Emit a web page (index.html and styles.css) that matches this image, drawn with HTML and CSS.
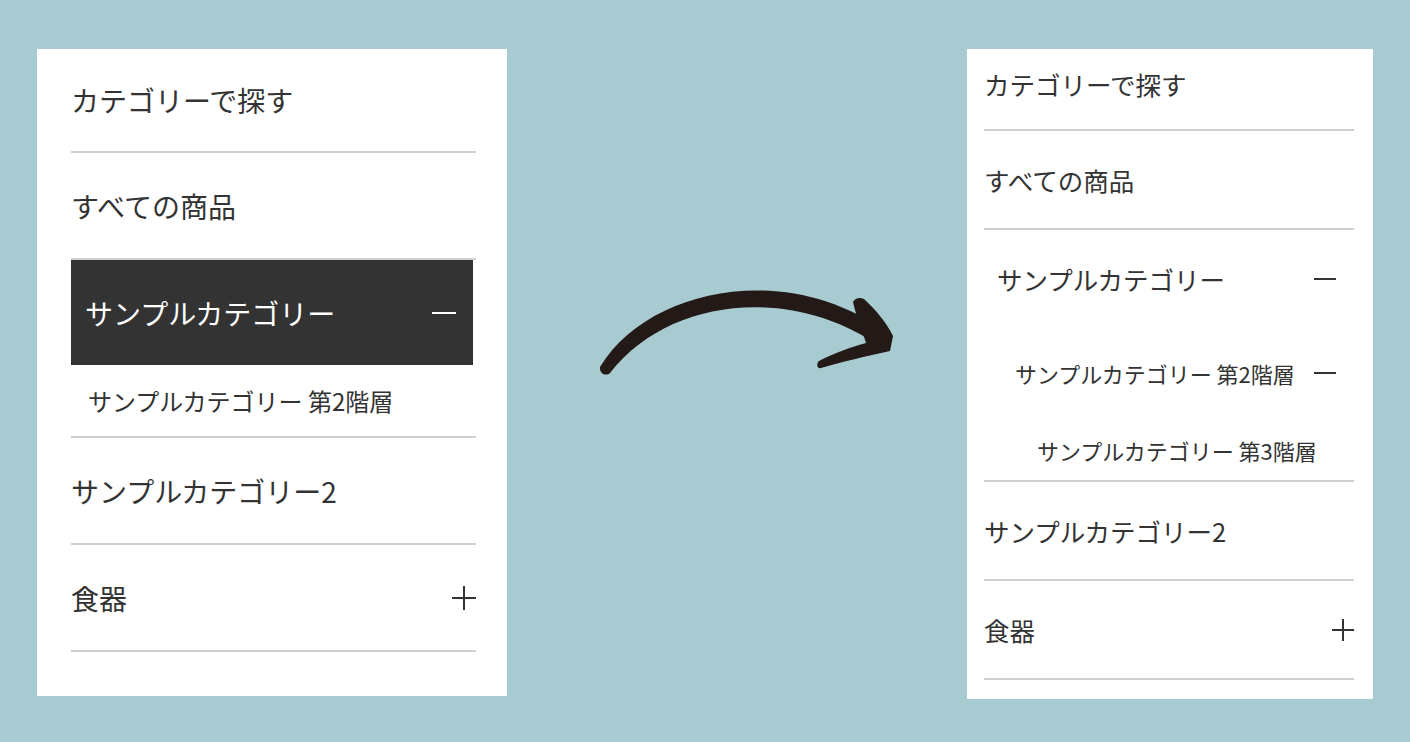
FILE: index.html
```html
<!DOCTYPE html>
<html lang="ja">

<head>
  <meta charset="UTF-8" />
  <title>カテゴリーメニュー</title>
  <meta name="viewport" content="width=device-width, initial-scale=1.0" />
  <link rel="stylesheet" href="styles.css">
</head>

<body>
  <!-- before -->
  <nav class="cat-menu cat-menu--before">
    <ul class="cat-list">
      <li class="cat-item"><span class="cat-link cat-link--title">カテゴリーで探す</span></li>
      <li class="cat-item"><a class="cat-link" href="#">すべての商品</a></li>
      <li class="cat-item">
        <a class="cat-link cat-link--open" href="#">サンプルカテゴリー<span class="icon-minus"></span></a>
        <ul class="sub-list">
          <li><a class="cat-link sub-link" href="#">サンプルカテゴリー 第2階層</a></li>
        </ul>
      </li>
      <li class="cat-item"><a class="cat-link" href="#">サンプルカテゴリー2</a></li>
      <li class="cat-item"><a class="cat-link" href="#">食器<span class="icon-plus"></span></a></li>
    </ul>
  </nav>

  <svg class="arrow" width="460" height="647" viewBox="507 49 460 647" aria-hidden="true">
    <path d="M600,367 C648,287 790,260 887,333 L881,347 C790,284 668,298 610,373 C606,377 599,373 600,367 Z" />
    <path d="M853,302 C855,298 860,297 864,299 C876,310 886,322 893,336 L890,351 C866,356 842,362 821,368 C817,369 816,364 819,361 C836,352 852,347 866,343 C862,330 856,316 853,302 Z" />
  </svg>

  <!-- after -->
  <nav class="cat-menu cat-menu--after">
    <ul class="cat-list">
      <li class="cat-item"><span class="cat-link cat-link--title">カテゴリーで探す</span></li>
      <li class="cat-item"><a class="cat-link" href="#">すべての商品</a></li>
      <li class="cat-item">
        <a class="cat-link cat-link--open" href="#">サンプルカテゴリー<span class="icon-minus"></span></a>
        <ul class="sub-list">
          <li>
            <a class="cat-link sub-link" href="#">サンプルカテゴリー 第2階層<span class="icon-minus"></span></a>
            <ul class="sub-list">
              <li><a class="cat-link sub-link sub-link--deep" href="#">サンプルカテゴリー 第3階層</a></li>
            </ul>
          </li>
        </ul>
      </li>
      <li class="cat-item"><a class="cat-link" href="#">サンプルカテゴリー2</a></li>
      <li class="cat-item"><a class="cat-link" href="#">食器<span class="icon-plus"></span></a></li>
    </ul>
  </nav>
</body>

</html>
```

FILE: styles.css
```css
:root {
  --bg-color: #a8cbd1;
  --text-color: #333333;
  --line-color: #d0d0d0;
}

* {
  box-sizing: border-box;
}

html,
body {
  margin: 0;
  padding: 0;
}

body {
  display: flex;
  justify-content: space-between;
  align-items: flex-start;
  padding: 49px 37px 0;
  min-height: 742px;
  background: var(--bg-color);
  font-family: 'Noto Sans CJK JP', 'Noto Sans', sans-serif;
  color: var(--text-color);
}

.cat-menu {
  background: white;
}

.cat-list,
.sub-list {
  list-style: none;
  margin: 0;
  padding: 0;
}

.cat-item {
  border-bottom: 2px solid var(--line-color);
}

.cat-link {
  display: flex;
  align-items: center;
  justify-content: space-between;
  color: inherit;
  text-decoration: none;
  white-space: nowrap;
}

.arrow {
  flex-shrink: 0;
  fill: #231a17;
}

/* icons */
.icon-minus,
.icon-plus {
  position: relative;
  display: block;
  flex-shrink: 0;
  width: 24px;
  height: 24px;
}

.icon-minus::before,
.icon-plus::before,
.icon-plus::after {
  content: "";
  position: absolute;
  background: currentColor;
}

.icon-minus::before,
.icon-plus::before {
  left: 0;
  right: 0;
  top: 11px;
  height: 2px;
}

.icon-plus::after {
  top: 0;
  bottom: 0;
  left: 11px;
  width: 2px;
}

/* before */
.cat-menu--before {
  width: 470px;
  padding: 0 31px 44px 34px;
}

.cat-menu--before .cat-link {
  height: 105px;
  font-size: 28px;
}

.cat-menu--before .cat-link--title {
  height: 102px;
}

.cat-menu--before .cat-link--open {
  margin-right: 3px;
  padding: 0 17px 0 14px;
  background: #333333;
  color: white;
}

.cat-menu--before .sub-link {
  height: 71px;
  padding-left: 17px;
  font-size: 24px;
}

/* after */
.cat-menu--after {
  width: 406px;
  padding: 0 19px 19px 17px;
}

.cat-menu--after .cat-link {
  height: 97px;
  font-size: 25.5px;
}

.cat-menu--after .cat-link--title {
  height: 80px;
  padding-bottom: 12px;
}

.cat-menu--after .icon-minus {
  width: 22px;
}

.cat-menu--after .icon-plus {
  width: 22px;
  height: 22px;
}

.cat-menu--after .icon-plus::before {
  top: 10px;
}

.cat-menu--after .icon-plus::after {
  left: 10px;
}

.cat-menu--after .cat-link--open {
  padding: 0 18px 0 13px;
}

.cat-menu--after .sub-link {
  height: 92px;
  padding: 0 18px 0 31px;
  font-size: 22px;
}

.cat-menu--after .sub-link--deep {
  height: 61px;
  padding-left: 53px;
}
```
